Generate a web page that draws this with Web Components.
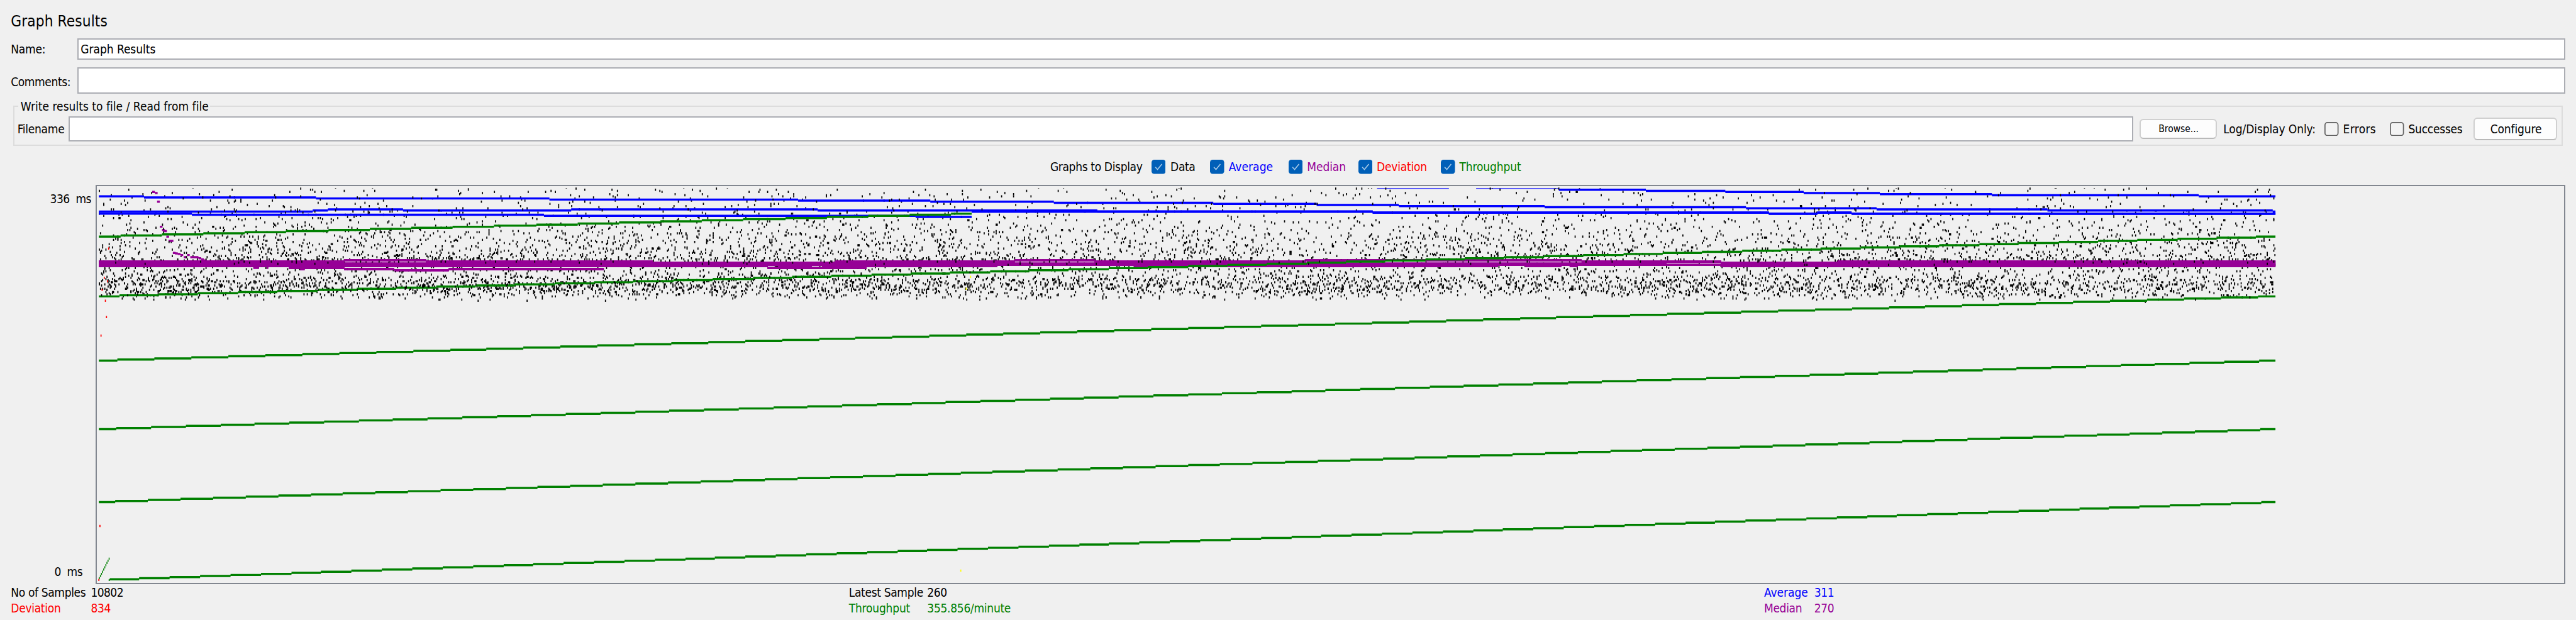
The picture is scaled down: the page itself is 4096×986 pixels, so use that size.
<!DOCTYPE html>
<html lang="en">
<head>
<meta charset="utf-8">
<title>Graph Results</title>
<style>
html, body { margin: 0; background: #f0f0f0; }
body { width: 4096px; height: 986px; overflow: hidden; font-family: "DejaVu Sans Condensed", "DejaVu Sans", sans-serif; font-stretch: condensed; color: #000; }
</style>
</head>
<body>
<graph-results-panel></graph-results-panel>

<template id="tpl-panel">
<style>
:host { display: flex; flex-direction: column; box-sizing: border-box; width: 4734px; height: 1139.5px; zoom: .86523; overflow: hidden; background: #f0f0f0; padding: 24px 20px 0 20px; }
.row { display: grid; align-items: center; flex: none; }
.title { height: 34px; margin-top: -1px; }
.name { grid-template-columns: 122px 4572px; height: 40px; margin-top: 13px; }
.comments { grid-template-columns: 122px 4572px; height: 48px; margin-top: 14px; }
.comments ui-text { padding-top: 4px; }
file-panel { margin: 8px 0 0 4px; }
.legend { grid-template-columns: 186px 35px 73px 34px 110px 34px 94px 34px 118px 34px 112px; height: 30px; margin: 24px 0 0 1910px; }
.chart { grid-template-columns: 156px 4538px; height: 734px; margin-top: 18px; align-items: stretch; }
.axis { display: flex; flex-direction: column; justify-content: space-between; padding: 11px 0 9px; box-sizing: border-box; }
.axis ui-text:first-child { margin-left: 72px; }
.axis ui-text:last-child { margin-left: 80px; }
.stats { grid-template-columns: 147px 1393px 144px 1538px 92px 200px; grid-auto-rows: 29px; height: 58px; margin-top: 0; }
.r { color: #f00; } .g { color: #008000; } .b { color: #00f; } .p { color: #960096; }
</style>
<div class="row title"><ui-text w="176" size="28">Graph Results</ui-text></div>
<div class="row name"><ui-text w="62">Name:</ui-text><text-field><ui-text w="136">Graph Results</ui-text></text-field></div>
<div class="row comments"><ui-text w="108">Comments:</ui-text><text-field></text-field></div>
<file-panel></file-panel>
<div class="row legend">
<ui-text w="168">Graphs to Display</ui-text>
<check-box checked></check-box><ui-text w="44">Data</ui-text>
<check-box checked></check-box><ui-text class="b" w="80">Average</ui-text>
<check-box checked></check-box><ui-text class="p" w="70">Median</ui-text>
<check-box checked></check-box><ui-text class="r" w="91">Deviation</ui-text>
<check-box checked></check-box><ui-text class="g" w="112">Throughput</ui-text>
</div>
<div class="row chart">
<div class="axis"><ui-text w="74">336  ms</ui-text><ui-text w="50">0  ms</ui-text></div>
<sample-graph></sample-graph>
</div>
<div class="row stats">
<ui-text w="136">No of Samples</ui-text><ui-text w="58">10802</ui-text>
<ui-text w="135">Latest Sample</ui-text><ui-text w="35">260</ui-text>
<ui-text class="b" w="79">Average</ui-text><ui-text class="b" w="35">311</ui-text>
<ui-text class="r" w="90">Deviation</ui-text><ui-text class="r" w="35">834</ui-text>
<ui-text class="g" w="111">Throughput</ui-text><ui-text class="g" w="152">355.856/minute</ui-text>
<ui-text class="p" w="68">Median</ui-text><ui-text class="p" w="35">270</ui-text>
</div>
</template>

<template id="tpl-file">
<style>
:host { display: grid; box-sizing: border-box; width: 4686px; height: 88px; grid-template-rows: 28px 60px; }
.frame { grid-area: 1 / 1 / 3 / 2; margin-top: 14px; border: 2.4px solid #dcdcdc; }
.legend { grid-area: 1 / 1; z-index: 1; justify-self: start; margin: 1px 0 0 10px; padding: 0 4px; background: #f0f0f0; }
.row { grid-area: 2 / 1; display: grid; grid-template-columns: 94px 3806px 154px 186px 34px 86px 34px 120px 154px; padding-left: 8px; align-items: center; height: 46px; margin-top: 6px; }
text-field { width: 3794px; height: 46px; }
</style>
<div class="frame"></div>
<div class="legend"><ui-text w="344">Write results to file / Read from file</ui-text></div>
<div class="row">
<ui-text w="85">Filename</ui-text><text-field></text-field>
<push-button style="width:142px;height:38px"><ui-text w="72" size="18">Browse...</ui-text></push-button>
<ui-text w="168">Log/Display Only:</ui-text>
<check-box></check-box><ui-text w="59">Errors</ui-text>
<check-box></check-box><ui-text w="98">Successes</ui-text>
<push-button style="width:154px;height:42px"><ui-text w="93">Configure</ui-text></push-button>
</div>
</template>

<script>
const sheet = (host, html) => {
  const root = host.attachShadow({ mode: "open" });
  root.innerHTML = html;
  return root;
};

// One line of text, tracked so that it fills the width given in "w".
class UiText extends HTMLElement {
  connectedCallback() {
    if (this.shadowRoot) return;
    const w = +this.getAttribute("w"), size = +(this.getAttribute("size") || 22);
    const root = sheet(this, `<style>
      :host { display: block; width: ${w}px; flex: none; font-size: ${size}px; line-height: 28px; white-space: pre; }
      span { display: inline-block; }
    </style><span><slot></slot></span>`);
    const span = root.querySelector("span");
    const n = this.textContent.length;
    let spacing = 0;
    for (let i = 0; i < 3; i++) {
      const natural = span.getBoundingClientRect().width / this.getBoundingClientRect().width * w;
      spacing += (w + 1.5 - natural) / n;
      span.style.letterSpacing = spacing + "px";
    }
  }
}

class TextField extends HTMLElement {
  connectedCallback() {
    if (this.shadowRoot) return;
    sheet(this, `<style>
      :host { display: flex; align-items: center; box-sizing: border-box; height: 100%; background: #fff; border: 2.4px solid #abadb3; padding-left: 4px; }
    </style><slot></slot>`);
  }
}

class PushButton extends HTMLElement {
  connectedCallback() {
    if (this.shadowRoot) return;
    sheet(this, `<style>
      :host { display: flex; align-items: center; justify-content: center; box-sizing: border-box; background: #fdfdfd; border: 2.4px solid #d0d0d0; border-bottom-color: #b9b9b9; border-radius: 7px; }
    </style><slot></slot>`);
  }
}

class CheckBox extends HTMLElement {
  connectedCallback() {
    if (this.shadowRoot) return;
    const on = this.hasAttribute("checked");
    sheet(this, `<style>:host { display: block; width: 26px; height: 26px; } svg { display: block; }</style>
      <svg width="26" height="26" viewBox="0 0 26 26">${on
        ? '<rect width="26" height="26" rx="5" fill="#005fb8"/><path d="M7 13.5l4 4.5 8-10" fill="none" stroke="#a9cbe8" stroke-width="1.8"/>'
        : '<rect x="1" y="1" width="24" height="24" rx="4.5" fill="#f3f3f3" stroke="#626262" stroke-width="2"/>'}</svg>`);
  }
}

// Sample plot: 2000 samples per sweep, two units per sample, wrapping back to the left edge.
class SampleGraph extends HTMLElement {
  connectedCallback() {
    if (this.shadowRoot) return;
    let seed = 20231;
    const rnd = () => {
      seed = (seed + 0x6D2B79F5) | 0;
      let t = Math.imul(seed ^ (seed >>> 15), 1 | seed);
      t = (t + Math.imul(t ^ (t >>> 7), 61 | t)) ^ t;
      return ((t ^ (t >>> 14)) >>> 0) / 4294967296;
    };
    const X0 = 182, X1 = 4182, END = 1786;
    const box = (x, y, w, h) => `M${x} ${y}h${w}v${h}h${-w}z`;
    const path = (d, fill) => `<path fill="${fill}" d="${d}"/>`;
    const steps = (list, end) => list.map(([x, y], i) => box(x, y, (i + 1 < list.length ? list[i + 1][0] : end) - x, 4)).join("");

    const average = [
      [[2865, 347], [3025, 349], [3171, 351], [3315, 353], [3455, 355], [3661, 357], [4041, 359]],
      [[182, 359], [265, 361], [581, 363], [1010, 365], [1467, 367], [1710, 369], [1937, 371], [2230, 373], [2420, 375], [2571, 377], [2839, 379], [3209, 381], [3449, 383], [3763, 385], [4177, 387]],
      [[182, 387], [575, 385], [603, 383], [741, 385], [1050, 383], [1503, 385], [2017, 387], [2523, 389], [3251, 391], [3340, 389], [3403, 391]],
      [[1786, 387], [2523, 389], [3251, 391], [3340, 389], [3403, 391]],
      [[1786, 387], [2523, 389], [3251, 391], [3340, 389], [3403, 391]],
      [[182, 391], [353, 393], [1000, 395], [1683, 397]]
    ];
    const through = [[200, 1066, 923], [182, 923, 789], [182, 789, 663], [182, 663, 545], [182, 545, 435], [182, 435, 393]];
    // Median band: [from, to, top, bottom]
    const band = [
      [182, 633, 479, 491], [531, 633, 491, 494.5], [552, 560, 494, 496.5], [466, 476, 491, 494], [491, 493, 491, 494],
      [633, 783, 477, 481], [633, 783, 483, 491], [783, 1200, 479, 491],
      [633, 725, 493, 496.5], [725, 825, 495, 498.5], [825, 1110, 493, 496.5],
      [1200, 1536, 481, 489], [1200, 1411, 487, 491], [1411, 1593, 490.5, 494.5], [1430, 1492, 488, 491], [1511, 1833, 487, 491],
      [1536, 1865, 479, 489], [1865, 2012, 477, 481], [1860, 2012, 483, 489], [2012, 2400, 479, 489], [2084, 2753, 487, 491],
      [2400, 2907, 477, 481], [2400, 2907, 483, 489], [2803, 2870, 488, 491], [2885, 2900, 488, 491],
      [2907, 3163, 479, 483], [2907, 3063, 481, 487], [2907, 3163, 485, 489], [3163, 3377, 481, 491], [3377, 4182, 479, 491]
    ];
    const settle = [[281, 351], [286, 353], [290, 369], [295, 415], [299, 421], [303, 423], [307, 433], [311, 441], [315, 441], [319, 463], [323, 464], [328, 465], [333, 467], [339, 471], [345, 467], [351, 471], [356, 471], [361, 471], [366, 473], [371, 475], [376, 477]];

    let out = "";
    for (let s = 0; s < 6; s++) {
      const end = s === 5 ? END : X1;
      let d = "", level = 0;
      for (let x = X0; x < end; x += 2) {
        // Response times drift in bursts a few dozen samples long.
        if (rnd() < .03) level = rnd() * 2 - 1;
        const u = rnd();
        let y;
        if (u < .44 + level * .2) y = 491 + 61 * (.55 * rnd() + .45 * Math.pow(rnd(), .7)) + level * 4;
        else if (u < .53 + level * .2) y = 476 + 24 * rnd();
        else y = 480 + 66 * Math.log(1 - rnd() * .999);
        if (rnd() > .95) continue;
        y = 2 * Math.round((y - 1) / 2) + 1;
        if (y < 345) continue;
        d += y < 346 ? box(x, 346, 2, 1) : box(x, y - 2, 2, 4);
      }
      out += path(d, "#000");
      out += path(steps(average[s], end), "#00f");
      if (s === 0) {
        out += path(box(2531, 346, 132, 1.2) + box(2713, 346, 152, 1.2), "#00f");
        out += path(settle.map(([x, y]) => box(x - 1, y, 5, 4)).join(""), "#960096");
      }
      out += path(band.filter(b => b[0] < end).map(b => box(b[0], b[2], Math.min(b[1], end) - b[0], b[3] - b[2])).join(""), "#960096");

      const [x0, a, b] = through[s];
      let g = "", from = x0, last = null;
      for (let x = x0; x <= end; x += 2) {
        const y = 2 * Math.round((a + (b - a) * (x - x0) / (end - x0) - 1) / 2) + 1;
        if (last === null) last = y;
        if (y !== last || x >= end) {
          g += box(from, last - 2, Math.max(x, from + 2) - from, last > 1065 ? 3 : 4);
          from = x; last = y;
        }
      }
      if (s === 0) for (let i = 0; i < 10; i++) g += box(182 + i * 2, 1061 - i * 4, 1.8, 4);
      out += path(g, "#008000");
    }
    // A few late samples that stay on top of the median band.
    let top = "";
    for (let i = 0; i < 110; i++) top += box(182 + 2 * Math.floor(rnd() * 2000), 479 + 2 * Math.floor(Math.pow(rnd(), 2) * 4), 2, 4);
    out += path(top, "#000");
    out += path([[200, 457], [192, 511], [198, 517], [188, 533], [194, 553], [196, 583], [186, 617], [184, 967], [182, 1066]].map(([x, y]) => box(x - 1, y - 2, 2, 4)).join(""), "#f00");
    out += path([[1783, 509], [1775, 531], [1765, 1049]].map(([x, y]) => box(x, y - 2, 2, 4)).join(""), "#ff0");

    sheet(this, `<style>
      :host { display: block; box-sizing: border-box; width: 4538px; height: 734px; border: 2.4px solid #828790; overflow: hidden; }
      svg { display: block; margin: -2.3px; }
    </style><svg width="4538" height="734" viewBox="176 340 4538 734">${out}</svg>`);
  }
}

const fromTemplate = id => class extends HTMLElement {
  connectedCallback() {
    if (this.shadowRoot) return;
    this.attachShadow({ mode: "open" }).append(document.getElementById(id).content.cloneNode(true));
  }
};

customElements.define("ui-text", UiText);
customElements.define("text-field", TextField);
customElements.define("push-button", PushButton);
customElements.define("check-box", CheckBox);
customElements.define("sample-graph", SampleGraph);
customElements.define("file-panel", fromTemplate("tpl-file"));
customElements.define("graph-results-panel", fromTemplate("tpl-panel"));
</script>
</body>
</html>
